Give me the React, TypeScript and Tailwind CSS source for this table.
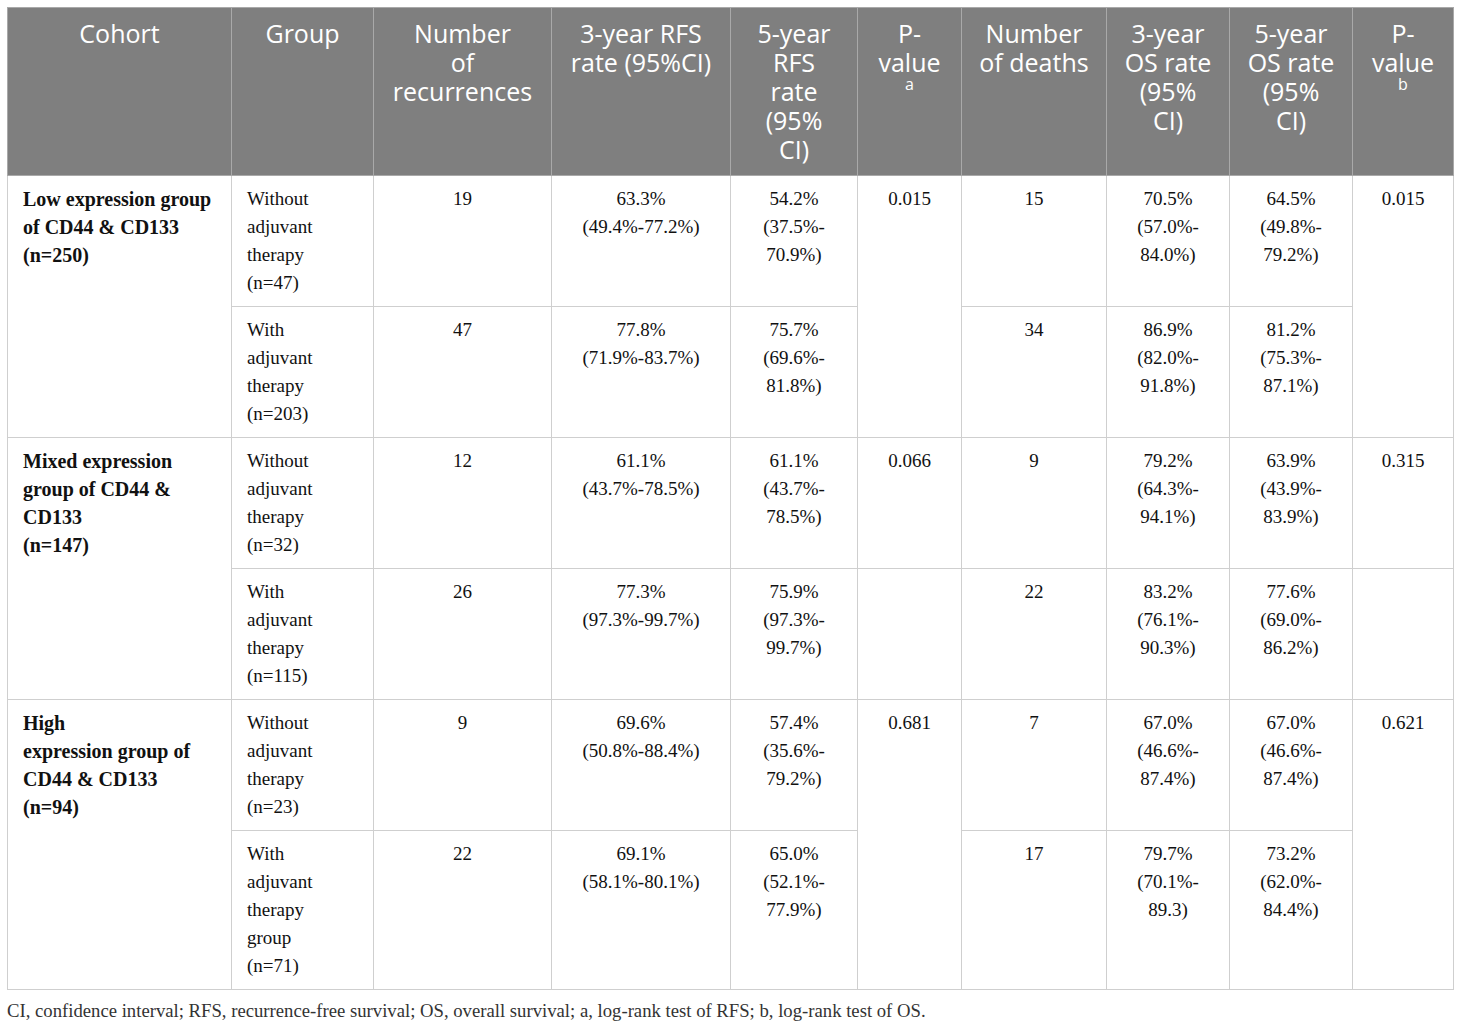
import React from "react";

type Row = {
  cohort?: string[];
  group: string[];
  rec: string;
  rfs3: string[];
  rfs5: string[];
  p1?: string | null;
  p1Span?: boolean;
  deaths: string;
  os3: string[];
  os5: string[];
  p2?: string | null;
  p2Span?: boolean;
};

const rows: Row[] = [
  {
    cohort: ["Low expression group", "of CD44 & CD133", "(n=250)"],
    group: ["Without", "adjuvant", "therapy", "(n=47)"],
    rec: "19",
    rfs3: ["63.3%", "(49.4%-77.2%)"],
    rfs5: ["54.2%", "(37.5%-", "70.9%)"],
    p1: "0.015",
    p1Span: true,
    deaths: "15",
    os3: ["70.5%", "(57.0%-", "84.0%)"],
    os5: ["64.5%", "(49.8%-", "79.2%)"],
    p2: "0.015",
    p2Span: true,
  },
  {
    group: ["With", "adjuvant", "therapy", "(n=203)"],
    rec: "47",
    rfs3: ["77.8%", "(71.9%-83.7%)"],
    rfs5: ["75.7%", "(69.6%-", "81.8%)"],
    deaths: "34",
    os3: ["86.9%", "(82.0%-", "91.8%)"],
    os5: ["81.2%", "(75.3%-", "87.1%)"],
  },
  {
    cohort: ["Mixed expression", "group of CD44 &", "CD133", "(n=147)"],
    group: ["Without", "adjuvant", "therapy", "(n=32)"],
    rec: "12",
    rfs3: ["61.1%", "(43.7%-78.5%)"],
    rfs5: ["61.1%", "(43.7%-", "78.5%)"],
    p1: "0.066",
    deaths: "9",
    os3: ["79.2%", "(64.3%-", "94.1%)"],
    os5: ["63.9%", "(43.9%-", "83.9%)"],
    p2: "0.315",
  },
  {
    group: ["With", "adjuvant", "therapy", "(n=115)"],
    rec: "26",
    rfs3: ["77.3%", "(97.3%-99.7%)"],
    rfs5: ["75.9%", "(97.3%-", "99.7%)"],
    p1: "",
    deaths: "22",
    os3: ["83.2%", "(76.1%-", "90.3%)"],
    os5: ["77.6%", "(69.0%-", "86.2%)"],
    p2: "",
  },
  {
    cohort: ["High", "expression group of", "CD44 & CD133", "(n=94)"],
    group: ["Without", "adjuvant", "therapy", "(n=23)"],
    rec: "9",
    rfs3: ["69.6%", "(50.8%-88.4%)"],
    rfs5: ["57.4%", "(35.6%-", "79.2%)"],
    p1: "0.681",
    p1Span: true,
    deaths: "7",
    os3: ["67.0%", "(46.6%-", "87.4%)"],
    os5: ["67.0%", "(46.6%-", "87.4%)"],
    p2: "0.621",
    p2Span: true,
  },
  {
    group: ["With", "adjuvant", "therapy", "group", "(n=71)"],
    rec: "22",
    rfs3: ["69.1%", "(58.1%-80.1%)"],
    rfs5: ["65.0%", "(52.1%-", "77.9%)"],
    deaths: "17",
    os3: ["79.7%", "(70.1%-", "89.3)"],
    os5: ["73.2%", "(62.0%-", "84.4%)"],
  },
];

const Lines = ({ items }: { items: string[] }) => (
  <>
    {items.map((t, i) => (
      <span key={i} className="block whitespace-nowrap">
        {t}
      </span>
    ))}
  </>
);

const Head = ({ lines, sup }: { lines: string[]; sup?: string }) => (
  <th className="border border-[#a9a9a9] px-1 pt-[11px] pb-[11px] align-top font-normal text-center">
    <Lines items={lines} />
    {sup && <span className="block text-[16px] leading-[14px]">{sup}</span>}
  </th>
);

const td = "border border-[#cfcfcf] pt-[9px] pb-[9px] align-top text-center";

const App: React.FC = () => {
  return (
    <div className="min-h-screen bg-white pl-[7px] pt-[7px]">
      <table className="table-fixed border-collapse w-[1446px]">
        <colgroup>
          <col className="w-[224px]" />
          <col className="w-[142px]" />
          <col className="w-[178px]" />
          <col className="w-[179px]" />
          <col className="w-[127px]" />
          <col className="w-[104px]" />
          <col className="w-[145px]" />
          <col className="w-[123px]" />
          <col className="w-[123px]" />
          <col className="w-[101px]" />
        </colgroup>
        <thead>
          <tr className="bg-[#7f7f7f] text-white text-[25px] leading-[29px] font-['Open_Sans',sans-serif]">
            <Head lines={["Cohort"]} />
            <Head lines={["Group"]} />
            <Head lines={["Number", "of", "recurrences"]} />
            <Head lines={["3-year RFS", "rate (95%CI)"]} />
            <Head lines={["5-year", "RFS", "rate", "(95%", "CI)"]} />
            <Head lines={["P-", "value"]} sup="a" />
            <Head lines={["Number", "of deaths"]} />
            <Head lines={["3-year", "OS rate", "(95%", "CI)"]} />
            <Head lines={["5-year", "OS rate", "(95%", "CI)"]} />
            <Head lines={["P-", "value"]} sup="b" />
          </tr>
        </thead>
        <tbody className="text-[19px] leading-[28px] text-[#111] font-['Liberation_Serif',serif]">
          {rows.map((r, i) => (
            <tr key={i}>
              {r.cohort && (
                <td rowSpan={2} className={`${td} !text-left pl-[15px] font-bold text-[20px]`}>
                  <Lines items={r.cohort} />
                </td>
              )}
              <td className={`${td} !text-left pl-[15px]`}>
                <Lines items={r.group} />
              </td>
              <td className={td}>{r.rec}</td>
              <td className={td}>
                <Lines items={r.rfs3} />
              </td>
              <td className={td}>
                <Lines items={r.rfs5} />
              </td>
              {r.p1 !== undefined && r.p1 !== null && (
                <td rowSpan={r.p1Span ? 2 : 1} className={td}>
                  {r.p1}
                </td>
              )}
              <td className={td}>{r.deaths}</td>
              <td className={td}>
                <Lines items={r.os3} />
              </td>
              <td className={td}>
                <Lines items={r.os5} />
              </td>
              {r.p2 !== undefined && r.p2 !== null && (
                <td rowSpan={r.p2Span ? 2 : 1} className={td}>
                  {r.p2}
                </td>
              )}
            </tr>
          ))}
        </tbody>
      </table>
      <p className="mt-[9px] text-[18.7px] leading-[24px] text-[#333] font-['Liberation_Serif',serif]">
        CI, confidence interval; RFS, recurrence-free survival; OS, overall survival; a, log-rank test of RFS; b,
        log-rank test of OS.
      </p>
    </div>
  );
};

export default App;
